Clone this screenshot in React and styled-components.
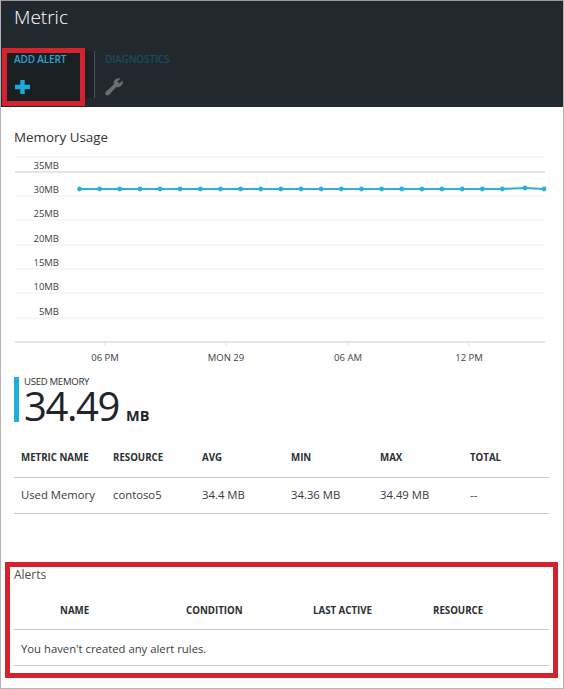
import React from 'react';
import styled, { createGlobalStyle } from 'styled-components';

const GlobalStyle = createGlobalStyle`
  html, body { margin: 0; padding: 0; background: #fff; }
  body { font-family: "Open Sans", "Noto Sans", sans-serif; color: #2a2f33; }
`;

const Blade = styled.div`
  box-sizing: border-box;
  width: 564px;
  height: 689px;
  border-left: 1px solid #b4b4b4;
  border-right: 1px solid #b4b4b4;
  border-bottom: 1px solid #b4b4b4;
  border-top: 1px solid #9a9a9a;
  background: #fff;
  overflow: hidden;
`;

const Header = styled.header`
  height: 106px;
  background: #22292e;
  display: flex;
  flex-direction: column;
`;
const Title = styled.h1`
  margin: 0;
  padding: 1px 0 0 13px;
  height: 45px;
  box-sizing: border-box;
  font-size: 19px;
  line-height: 30px;
  font-weight: 300;
  color: #fff;
`;
const Toolbar = styled.div`
  display: flex;
  align-items: flex-start;
  padding-left: 1px;
`;
const ActiveCommand = styled.div`
  box-sizing: border-box;
  width: 83px;
  height: 58px;
  margin-top: 2px;
  padding-left: 7px;
  background: #1a1f22;
  border: 5px solid #d5222c;
`;
const ActiveTail = styled.div`
  width: 9px;
  height: 47px;
  margin-top: 5px;
  background: #1c2125;
`;
const Divider = styled.div`
  width: 1px;
  height: 47px;
  margin-top: 5px;
  background: #4a5054;
`;
const Command = styled.div`
  margin-top: 7px;
  padding-left: 10px;
`;
const CommandLabel = styled.div`
  font-size: 10px;
  line-height: 12px;
  font-weight: 600;
  letter-spacing: -0.15px;
  white-space: nowrap;
  color: ${(props) => (props.disabled ? '#1d4a5f' : '#2aa5d6')};
`;
const CommandIcon = styled.svg`
  display: block;
  margin-top: ${(props) => props.gap}px;
  margin-left: ${(props) => props.offset || 0}px;
`;

const Section = styled.section`
  padding: 20px 12px 0 13px;
`;
const SectionTitle = styled.h2`
  margin: 0;
  font-size: 13.4px;
  line-height: 20px;
  font-weight: 400;
  color: #333;
`;
const ChartFrame = styled.svg`
  display: block;
  margin: 4px 0 0 -13px;
`;
const AxisText = styled.text`
  font-size: 9.5px;
  fill: #3c4145;
`;

const Legend = styled.div`
  display: flex;
  height: 45px;
  margin-top: 10px;
`;
const LegendBar = styled.div`
  width: 5px;
  background: #1fafdc;
`;
const LegendBody = styled.div`
  padding-left: 5px;
`;
const LegendLabel = styled.div`
  font-size: 9.6px;
  line-height: 10px;
  letter-spacing: -0.3px;
  color: #2a2f33;
`;
const LegendValue = styled.div`
  display: flex;
  align-items: baseline;
  height: 35px;
  padding-top: 1px;
  color: #1f252a;
`;
const BigNumber = styled.span`
  font-size: 40px;
  line-height: 35px;
  font-weight: 500;
  letter-spacing: -1.4px;
`;
const Unit = styled.span`
  margin-left: 7px;
  font-size: 14.5px;
  font-weight: 700;
`;

const Row = styled.div`
  display: grid;
  grid-template-columns: ${(props) => props.columns};
  align-items: center;
  box-sizing: border-box;
  height: ${(props) => props.height}px;
  width: 535px;
  padding-left: ${(props) => props.inset || 7}px;
  padding-top: ${(props) => props.drop || 0}px;
  padding-bottom: ${(props) => props.lift || 0}px;
  border-bottom: 1px solid #c8c8c8;
`;
const HeadCell = styled.div`
  font-size: 9.7px;
  font-weight: 700;
  color: #2a2f33;
  white-space: nowrap;
`;
const Cell = styled.div`
  font-size: 11.3px;
  color: #383d41;
  white-space: nowrap;
`;

const MetricTable = styled.div`
  margin-top: 18px;
`;

const AlertsBox = styled.section`
  box-sizing: border-box;
  width: 553px;
  height: 116px;
  margin: 48px 0 0 4px;
  border: 5px solid #d5222c;
  padding-left: 4px;
`;
const AlertsTitle = styled.h2`
  margin: 0 0 7px;
  font-size: 12px;
  line-height: 16px;
  font-weight: 400;
  color: #4a4f53;
`;

const gridLines = [
  { y: 6, heavy: false },
  { y: 21, heavy: true },
  { y: 45, heavy: false },
  { y: 69, heavy: false },
  { y: 94, heavy: false },
  { y: 118, heavy: false },
  { y: 142, heavy: false },
  { y: 167, heavy: false },
  { y: 191, heavy: true },
];
const yLabels = [
  ['35MB', 14], ['30MB', 38], ['25MB', 62], ['20MB', 87], ['15MB', 111], ['10MB', 135], ['5MB', 160],
];
const xLabels = [
  ['06 PM', 104], ['MON 29', 225], ['06 AM', 347], ['12 PM', 468],
];
const points = [
  ...Array.from({ length: 22 }, (_, i) => [78.5 + i * 20.14, 38]),
  [524, 37],
  [543, 38],
];

const MemoryChart = () => (
  <ChartFrame width="550" height="216" viewBox="0 0 550 216">
    {gridLines.map((l) => (
      <line
        key={l.y}
        x1="14"
        x2="544"
        y1={l.y}
        y2={l.y}
        stroke={l.heavy ? '#e6e6e6' : '#efefef'}
        strokeWidth={l.heavy ? 2 : 1}
      />
    ))}
    {xLabels.map(([t, x]) => (
      <line key={t} x1={x} x2={x} y1="191" y2="195" stroke="#e2e2e2" />
    ))}
    {yLabels.map(([t, y]) => (
      <AxisText key={t} x="58" y={y + 3.5} textAnchor="end">{t}</AxisText>
    ))}
    {xLabels.map(([t, x]) => (
      <AxisText key={t} x={x} y="210" textAnchor="middle">{t}</AxisText>
    ))}
    <polyline
      points={points.map((p) => p.join(',')).join(' ')}
      fill="none"
      stroke="#2fb0d2"
      strokeWidth="2.2"
    />
    {points.map(([x, y]) => (
      <circle key={x} cx={x} cy={y} r="2.4" fill="#2fb0d2" />
    ))}
  </ChartFrame>
);

const metricColumns = '92px 89px 89px 89px 90px 1fr';
const alertColumns = '126px 127px 120px 1fr';

export default function App() {
  return (
    <>
      <GlobalStyle />
      <Blade>
        <Header>
          <Title>Metric</Title>
          <Toolbar>
            <ActiveCommand>
              <CommandLabel>ADD ALERT</CommandLabel>
              <CommandIcon gap={15} offset={1} width="15" height="14" viewBox="0 0 15 14">
                <path d="M5.3 0h4.4v4.8H15v4.4H9.7V14H5.3V9.2H0V4.8h5.3z" fill="#1fa8dc" />
              </CommandIcon>
            </ActiveCommand>
            <ActiveTail />
            <Divider />
            <Command>
              <CommandLabel disabled>DIAGNOSTICS</CommandLabel>
              <CommandIcon gap={13} width="18" height="18" viewBox="0 0 18 18">
                <path
                  d="M15.6 0.4L12.4 3.6L14.4 5.6L17.6 2.4C18.3 5 17.2 7.4 15 8.6C13.6 9.3 12.4 9.3 11.3 8.9L4.4 16.6C3.4 17.7 1.8 17.7 0.8 16.8C-0.1 15.8 0 14.4 1 13.4L8.8 6.6C8.4 5.3 8.6 3.8 9.4 2.6C10.8 0.4 13.3 -0.3 15.6 0.4Z"
                  fill="#6a6e70"
                />
              </CommandIcon>
            </Command>
          </Toolbar>
        </Header>

        <Section>
          <SectionTitle>Memory Usage</SectionTitle>
          <MemoryChart />
          <Legend>
            <LegendBar />
            <LegendBody>
              <LegendLabel>USED MEMORY</LegendLabel>
              <LegendValue>
                <BigNumber>34.49</BigNumber>
                <Unit>MB</Unit>
              </LegendValue>
            </LegendBody>
          </Legend>
          <MetricTable>
            <Row columns={metricColumns} height={38} lift={2}>
              <HeadCell>METRIC NAME</HeadCell>
              <HeadCell>RESOURCE</HeadCell>
              <HeadCell>AVG</HeadCell>
              <HeadCell>MIN</HeadCell>
              <HeadCell>MAX</HeadCell>
              <HeadCell>TOTAL</HeadCell>
            </Row>
            <Row columns={metricColumns} height={36} lift={2}>
              <Cell>Used Memory</Cell>
              <Cell>contoso5</Cell>
              <Cell>34.4 MB</Cell>
              <Cell>34.36 MB</Cell>
              <Cell>34.49 MB</Cell>
              <Cell>--</Cell>
            </Row>
          </MetricTable>
        </Section>

        <AlertsBox>
          <AlertsTitle>Alerts</AlertsTitle>
          <Row columns={alertColumns} height={40} inset={46} drop={2}>
            <HeadCell>NAME</HeadCell>
            <HeadCell>CONDITION</HeadCell>
            <HeadCell>LAST ACTIVE</HeadCell>
            <HeadCell>RESOURCE</HeadCell>
          </Row>
          <Row columns="1fr" height={36} drop={1}>
            <Cell>You haven't created any alert rules.</Cell>
          </Row>
        </AlertsBox>
      </Blade>
    </>
  );
}
